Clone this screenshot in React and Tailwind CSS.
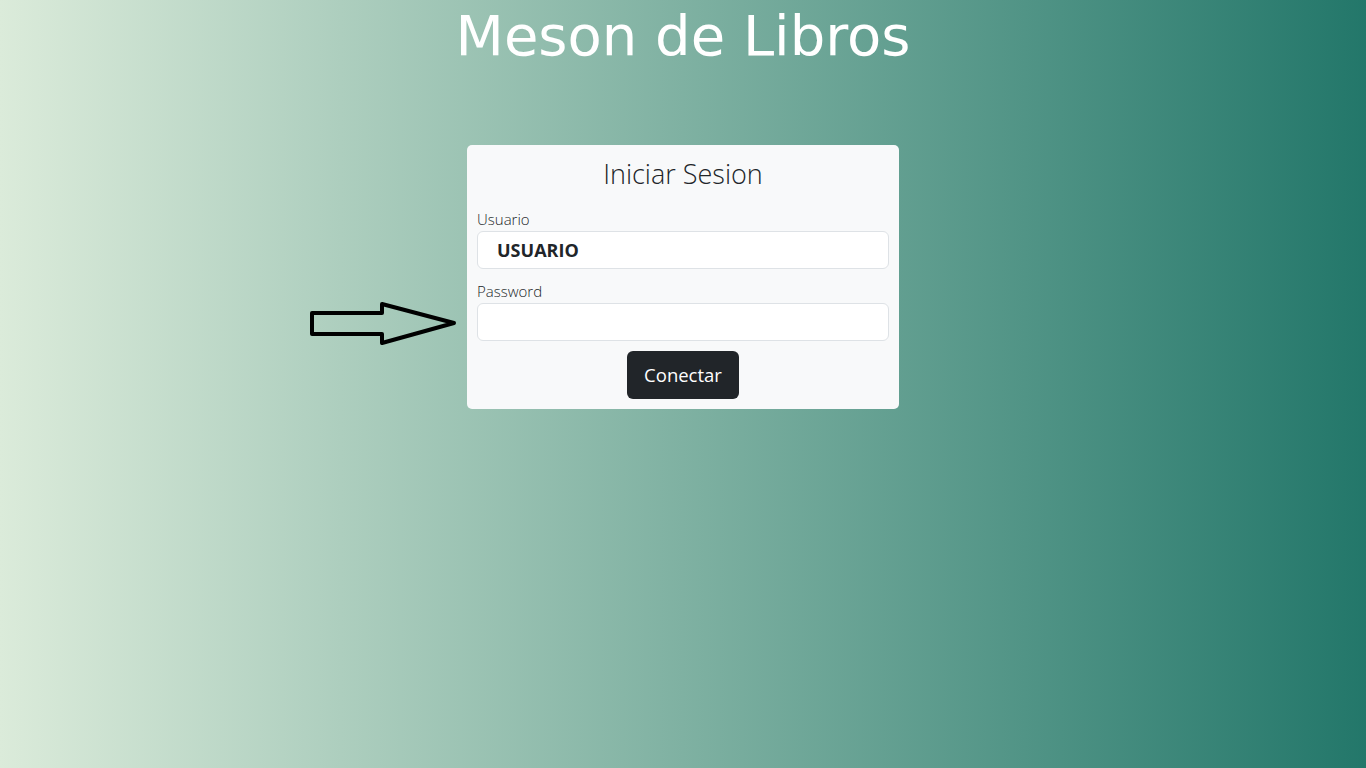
export default function App() {
  return (
    <div className="min-h-[768px] w-full bg-[linear-gradient(to_right,#dbebda,#23776a)] font-['Open_Sans',sans-serif] flex flex-col items-center">
      <h1 className="text-white text-[56px] leading-[76px] font-['DejaVu_Sans',sans-serif] mt-[-2px]">Meson de Libros</h1>

      <div className="mt-[71px] flex items-start">
        {/* arrow pointing at password */}
        <div className="w-[157px] h-[264px] flex items-start">
          <svg className="mt-[157px] ml-[-1px]" width="150" height="46" viewBox="0 0 150 46">
            <path d="M3 11 H73 V2 L145 21 L73 41 V32 H3 Z" fill="none" stroke="#000" strokeWidth="4" strokeLinejoin="round" />
          </svg>
        </div>

        <div className="w-[432px] bg-[#f8f9fa] rounded-[5px] px-[10px] pt-[10px] pb-[10px]">
          <h2 className="text-center text-[27px] leading-[38px] font-light text-[#212529]">Iniciar Sesion</h2>
          <label className="block mt-[16px] text-[15px] leading-[20px] font-light text-[#212529]">Usuario</label>
          <div className="mt-[2px] h-[38px] bg-white border border-[#dee2e6] rounded-[6px] flex items-center pl-[19px]">
            <span className="text-[18px] font-bold text-[#212529]">USUARIO</span>
          </div>
          <label className="block mt-[12px] text-[15px] leading-[20px] font-light text-[#212529]">Password</label>
          <input type="password" className="mt-[2px] w-full h-[38px] bg-white border border-[#dee2e6] rounded-[6px] outline-none" />
          <div className="flex justify-center mt-[10px]">
            <button className="w-[112px] h-[48px] bg-[#212529] text-white text-[18.5px] rounded-[6px]">Conectar</button>
          </div>
        </div>
        <div className="w-[157px]" />
      </div>
    </div>
  );
}
